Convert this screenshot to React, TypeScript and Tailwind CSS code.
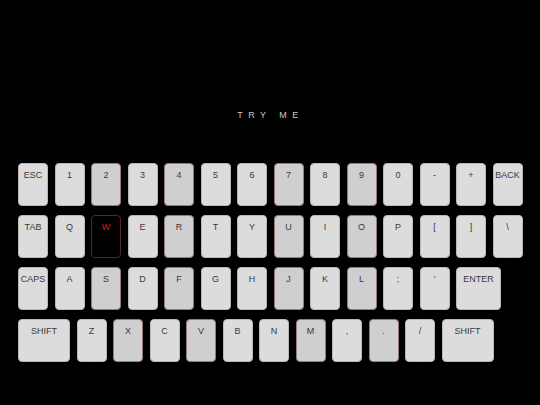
import React from 'react';

type K = { label: string; w?: string; hot?: boolean; active?: boolean };

const rows: K[][] = [
  [
    { label: 'ESC' }, { label: '1' }, { label: '2', hot: true }, { label: '3' }, { label: '4', hot: true },
    { label: '5' }, { label: '6' }, { label: '7', hot: true }, { label: '8' }, { label: '9', hot: true },
    { label: '0' }, { label: '-' }, { label: '+' }, { label: 'BACK' },
  ],
  [
    { label: 'TAB' }, { label: 'Q' }, { label: 'W', active: true }, { label: 'E' }, { label: 'R', hot: true },
    { label: 'T' }, { label: 'Y' }, { label: 'U', hot: true }, { label: 'I' }, { label: 'O', hot: true },
    { label: 'P' }, { label: '[' }, { label: ']' }, { label: '\\' },
  ],
  [
    { label: 'CAPS' }, { label: 'A' }, { label: 'S', hot: true }, { label: 'D' }, { label: 'F', hot: true },
    { label: 'G' }, { label: 'H' }, { label: 'J', hot: true }, { label: 'K' }, { label: 'L', hot: true },
    { label: ';' }, { label: "'" }, { label: 'ENTER', w: 'w-[45px]' },
  ],
  [
    { label: 'SHIFT', w: 'w-[52px]' }, { label: 'Z' }, { label: 'X', hot: true }, { label: 'C' }, { label: 'V', hot: true },
    { label: 'B' }, { label: 'N' }, { label: 'M', hot: true }, { label: ',' }, { label: '.', hot: true },
    { label: '/' }, { label: 'SHIFT', w: 'w-[52px]' },
  ],
];

function Key({ k }: { k: K }) {
  const tone = k.active
    ? 'bg-black border-[#5a2424] text-[#d42020]'
    : k.hot
    ? 'bg-[#cfcfcf] border-[#9a7a7a] text-[#3a3a3a]'
    : 'bg-[#dcdcdc] border-[#b8b8b8] text-[#3a3a3a]';
  return (
    <div
      className={`${k.w ?? 'w-[30px]'} h-[43px] shrink-0 rounded-[4px] border flex justify-center pt-[5px] text-[9px] leading-[12px] ${tone}`}
    >
      {k.label}
    </div>
  );
}

export default function App() {
  return (
    <div
      className="w-[540px] h-[405px] bg-black overflow-hidden"
      style={{ fontFamily: '"Liberation Sans", Arial, sans-serif' }}
    >
      <div className="pt-[110px] flex justify-center">
        <div className="text-[9px] leading-[10px] text-[#c8c8c8] tracking-[5.5px] pl-[1px]">TRY ME</div>
      </div>
      <div className="pt-[43px] pl-[18px] flex flex-col gap-[9px]">
        {rows.map((row, i) => (
          <div key={i} className="flex gap-[6.5px]">
            {row.map((k, j) => (
              <Key key={j} k={k} />
            ))}
          </div>
        ))}
      </div>
    </div>
  );
}
